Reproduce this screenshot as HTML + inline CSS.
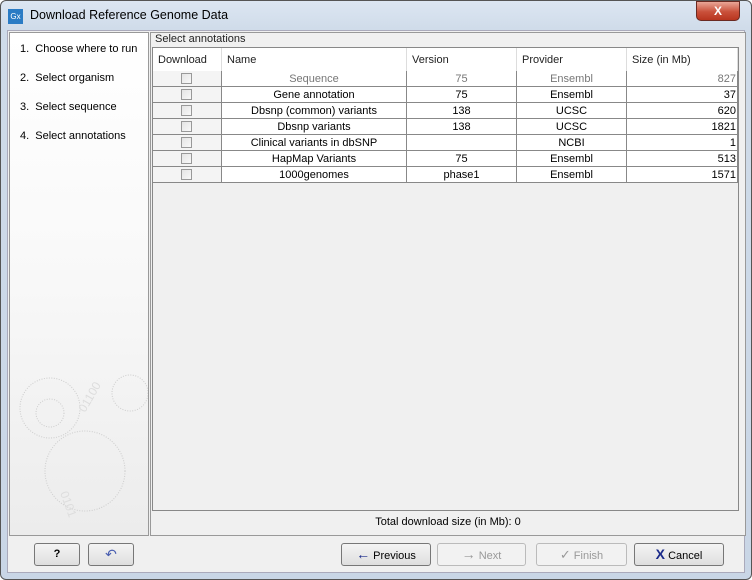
<!DOCTYPE html>
<html><head><meta charset="utf-8"><style>
*{margin:0;padding:0;box-sizing:border-box}
body{width:752px;height:580px;overflow:hidden;font-family:"Liberation Sans",sans-serif;font-size:11px;color:#000;background:#fff}
.win{position:absolute;left:0;top:0;width:752px;height:580px;background:linear-gradient(#dce6f2,#cfdbe9 30px,#c9d6e6);border:1px solid #555;border-radius:6px}
.title{position:absolute;left:29px;top:7px;font-size:12.5px;color:#000}
.ico{position:absolute;left:7px;top:8px;width:15px;height:15px;background:#2a7bc4;color:#fff;font-size:8px;line-height:15px;text-align:center}
.close{position:absolute;left:695px;top:0;width:44px;height:20px;border-radius:0 0 5px 5px;background:linear-gradient(#e9a697,#c9503a 55%,#b8351f);border:1px solid #6a2a22;color:#fff;font-weight:bold;text-align:center;line-height:18px;font-size:12px}
.client{position:absolute;left:7px;top:30px;width:738px;height:543px;background:#f0f0f0;border:1px solid #aab}
.left{position:absolute;left:9px;top:32px;width:140px;height:504px;background:linear-gradient(#fff,#f8f8f8 50%,#ececec);border:1px solid #999}
.left div{position:absolute;left:10px;font-size:11px}
.right{position:absolute;left:150px;top:32px;width:596px;height:504px;border:1px solid #999;background:#f0f0f0}
.lbl{position:absolute;left:155px;top:33px;color:#222}
.tbl{position:absolute;left:152px;top:47px;width:587px;height:464px;border:1px solid #888;background:#f0f0f0}
.hd{position:absolute;top:48px;height:23px;background:#fff;border-right:1px solid #ddd;line-height:24px;padding-left:5px;color:#222}
.cell{position:absolute;height:16px;line-height:16px;text-align:center;background:#fff;border-right:1px solid #888;border-bottom:1px solid #888;white-space:nowrap}
.cb{position:absolute;width:11px;height:11px;border:1px solid #999;background:linear-gradient(135deg,#e4e4e4,#f8f8f8)}
.btn{position:absolute;top:543px;height:23px;border:1px solid #777;border-radius:3px;background:linear-gradient(#f4f4f4,#dedede);text-align:center;line-height:21px;font-size:11px}
.dis{color:#999;border-color:#bbb;background:#f2f2f2}
</style></head><body>
<div class="win">
<div class="ico">Gx</div><div class="title">Download Reference Genome Data</div>
<div class="close">X</div>
</div>
<div class="client"></div>
<div class="left">
<div style="top:10px">1.&nbsp;&nbsp;Choose where to run</div>
<div style="top:39px">2.&nbsp;&nbsp;Select organism</div>
<div style="top:68px">3.&nbsp;&nbsp;Select sequence</div>
<div style="top:97px">4.&nbsp;&nbsp;Select annotations</div>
<svg style="position:absolute;left:0;top:320px" width="138" height="184" fill="none" stroke="#ccc" stroke-dasharray="1 1.5">
<circle cx="40" cy="55" r="30"/><circle cx="40" cy="60" r="14"/><circle cx="75" cy="118" r="40"/><circle cx="120" cy="40" r="18"/>
<text x="75" y="60" fill="#ddd" stroke="none" font-size="12" transform="rotate(-60 75 60)">01100</text>
<text x="50" y="140" fill="#ddd" stroke="none" font-size="12" transform="rotate(70 50 140)">0101</text>
</svg>
</div>
<div class="right"></div>
<div class="lbl">Select annotations</div>
<div class="tbl"></div>
<div class="hd" style="left:153px;width:69px">Download</div>
<div class="hd" style="left:222px;width:185px">Name</div>
<div class="hd" style="left:407px;width:110px">Version</div>
<div class="hd" style="left:517px;width:110px">Provider</div>
<div class="hd" style="left:627px;width:111px">Size (in Mb)</div>
<div id="rows"></div>
<div style="position:absolute;left:150px;top:516px;width:596px;text-align:center">Total download size (in Mb): 0</div>
<div class="btn" style="left:34px;width:46px;font-weight:bold">?</div>
<div class="btn" style="left:88px;width:46px;color:#4a5fb0;font-size:14px">↶</div>
<div class="btn" style="left:341px;width:90px"><span style="color:#1a2a8a;font-weight:bold;font-size:14px">&#8592;</span> Previous</div>
<div class="btn dis" style="left:437px;width:89px"><span style="font-size:14px">&#8594;</span> Next</div>
<div class="btn dis" style="left:536px;width:91px"><span style="font-size:13px">&#10003;</span> Finish</div>
<div class="btn" style="left:634px;width:90px"><span style="color:#1a2a8a;font-weight:bold;font-size:14px">X</span> Cancel</div>
<script>
var d=[["Sequence","75","Ensembl","827",1],["Gene annotation","75","Ensembl","37"],["Dbsnp (common) variants","138","UCSC","620"],["Dbsnp variants","138","UCSC","1821"],["Clinical variants in dbSNP","","NCBI","1"],["HapMap Variants","75","Ensembl","513"],["1000genomes","phase1","Ensembl","1571"]];
var h="";d.forEach(function(r,i){var y=71+i*16,c=r[4]?"color:#777;":"";
h+='<div class="cell" style="left:153px;top:'+y+'px;width:69px;background:#f4f4f4"></div><div class="cb" style="left:181px;top:'+(y+2)+'px"></div>';
h+='<div class="cell" style="'+c+'left:222px;top:'+y+'px;width:185px">'+r[0]+'</div>';
h+='<div class="cell" style="'+c+'left:407px;top:'+y+'px;width:110px">'+r[1]+'</div>';
h+='<div class="cell" style="'+c+'left:517px;top:'+y+'px;width:110px">'+r[2]+'</div>';
h+='<div class="cell" style="'+c+'left:627px;top:'+y+'px;width:111px;text-align:right;padding-right:1px">'+r[3]+'</div>';});
document.getElementById("rows").innerHTML=h;
</script>
</body></html>
